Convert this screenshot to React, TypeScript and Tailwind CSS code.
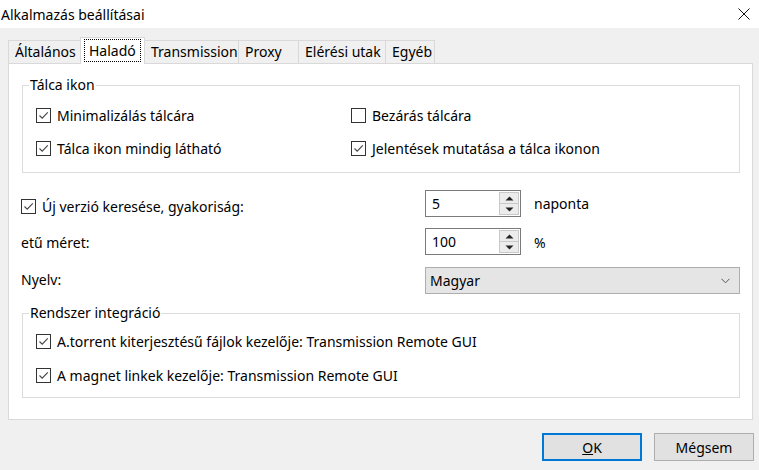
import type { ReactNode } from 'react';

function Check({ checked }: { checked: boolean }) {
  return (
    <span className="flex h-[15px] w-[15px] shrink-0 items-center justify-center border border-[#333] bg-white">
      {checked && (
        <svg width="13" height="13" viewBox="0 0 13 13" fill="none">
          <path d="M2.5 6.5 L5.2 9.2 L10.8 3.4" stroke="#444" strokeWidth="1.1" />
        </svg>
      )}
    </span>
  );
}

function CheckRow({ checked, children }: { checked: boolean; children: ReactNode }) {
  return (
    <label className="flex items-center gap-[6px] whitespace-nowrap">
      <Check checked={checked} />
      <span>{children}</span>
    </label>
  );
}

function Spin({ value }: { value: string }) {
  return (
    <div className="flex h-[27px] w-[96px] border border-[#7a7a7a] bg-white">
      <span className="flex-1 pl-[6px] leading-[25px]">{value}</span>
      <div className="my-[1px] mr-[1px] flex w-[20px] flex-col">
        <span className="flex h-[12px] items-center justify-center border border-[#c9c9c9] bg-[#ececec]">
          <svg width="9" height="5" viewBox="0 0 9 5"><path d="M0.5 4.5 L4.5 0.5 L8.5 4.5 Z" fill="#222" /></svg>
        </span>
        <span className="-mt-px flex h-[12px] items-center justify-center border border-[#c9c9c9] bg-[#ececec]">
          <svg width="9" height="5" viewBox="0 0 9 5"><path d="M0.5 0.5 L4.5 4.5 L8.5 0.5 Z" fill="#222" /></svg>
        </span>
      </div>
    </div>
  );
}

const tabs = [
  { label: 'Általános', w: 'w-[73px]' },
  { label: 'Haladó', w: 'w-[65px]', active: true },
  { label: 'Transmission', w: 'w-[95px]' },
  { label: 'Proxy', w: 'w-[61px]' },
  { label: 'Elérési utak', w: 'w-[88px]' },
  { label: 'Egyéb', w: 'w-[50px]' },
];

export default function App() {
  return (
    <div className="h-[470px] w-[759px] overflow-hidden bg-[#f0f0f0] text-[14px] text-black" style={{ fontFamily: '"Noto Sans", "Open Sans", sans-serif' }}>
      <div className="flex h-[28px] items-center justify-between bg-white pl-[1px] pr-[8px]">
        <span className="text-[14px]">Alkalmazás beállításai</span>
        <svg width="12" height="12" viewBox="0 0 12 12" className="mr-[1px]">
          <path d="M0.5 0.5 L11.5 11.5 M11.5 0.5 L0.5 11.5" stroke="#111" strokeWidth="1" />
        </svg>
      </div>

      <div className="pl-[8px] pr-[6px] pt-[10px]">
        <div className="flex h-[25px] items-end">
          {tabs.map((t, i) => (
            <div
              key={t.label}
              className={`${t.w} ${i > 0 ? '-ml-px' : ''} ${
                t.active
                  ? 'relative z-10 -mb-px h-[27px] border border-b-0 border-[#d9d9d9] bg-white pl-[3px] pt-[1px]'
                  : 'h-[23px] border border-b-0 border-[#d9d9d9] bg-[#f0f0f0] pl-[6px] leading-[22px]'
              }`}
            >
              {t.active ? (
                <span className="inline-block border border-dotted border-black px-[4px] leading-[21px]">{t.label}</span>
              ) : (
                t.label
              )}
            </div>
          ))}
        </div>

        <div className="h-[357px] border border-[#d9d9d9] bg-white pt-[11px]">
          <fieldset className="ml-[13px] h-[98px] w-[718px] border border-[#dcdcdc] pl-[13px]">
            <legend className="-ml-[7px] px-[1px] leading-[20px]">Tálca ikon</legend>
            <div className="mt-[10px] grid grid-cols-[315px_1fr] gap-y-[12px]">
              <CheckRow checked>Minimalizálás tálcára</CheckRow>
              <CheckRow checked={false}>Bezárás tálcára</CheckRow>
              <CheckRow checked>Tálca ikon mindig látható</CheckRow>
              <CheckRow checked>Jelentések mutatása a tálca ikonon</CheckRow>
            </div>
          </fieldset>

          <div className="ml-[12px] mt-[17px] grid grid-cols-[404px_96px_1fr] items-center gap-y-[11px]">
            <div className="pt-[5px]">
              <CheckRow checked>Új verzió keresése, gyakoriság:</CheckRow>
            </div>
            <Spin value="5" />
            <span className="pl-[13px]">naponta</span>

            <span className="pt-[1px]">etű méret:</span>
            <div className="h-[28px]">
              <Spin value="100" />
            </div>
            <span className="pl-[13px]">%</span>

            <span className="-mt-[2px]">Nyelv:</span>
            <div className="col-span-2 flex h-[27px] w-[315px] items-center justify-between border border-[#adadad] bg-[#e5e5e5] pl-[4px] pr-[9px]">
              <span>Magyar</span>
              <svg width="9" height="6" viewBox="0 0 9 6"><path d="M0.5 0.8 L4.5 4.8 L8.5 0.8" stroke="#555" fill="none" strokeWidth="1" /></svg>
            </div>
          </div>

          <fieldset className="ml-[13px] mt-[9px] h-[95px] w-[718px] border border-[#dcdcdc] pl-[13px]">
            <legend className="-ml-[7px] px-[1px] leading-[20px]">Rendszer integráció</legend>
            <div className="mt-[8px] flex flex-col gap-y-[13px]">
              <CheckRow checked>A.torrent kiterjesztésű fájlok kezelője: Transmission Remote GUI</CheckRow>
              <CheckRow checked>A magnet linkek kezelője: Transmission Remote GUI</CheckRow>
            </div>
          </fieldset>
        </div>

        <div className="mt-[13px] flex justify-end gap-[12px] pr-[-2px]">
          <button className="h-[28px] w-[100px] border-2 border-[#0078d7] bg-[#e1e1e1]">
            <u>O</u>K
          </button>
          <button className="-mr-px h-[28px] w-[100px] border border-[#adadad] bg-[#e1e1e1]">Mégsem</button>
        </div>
      </div>
    </div>
  );
}
